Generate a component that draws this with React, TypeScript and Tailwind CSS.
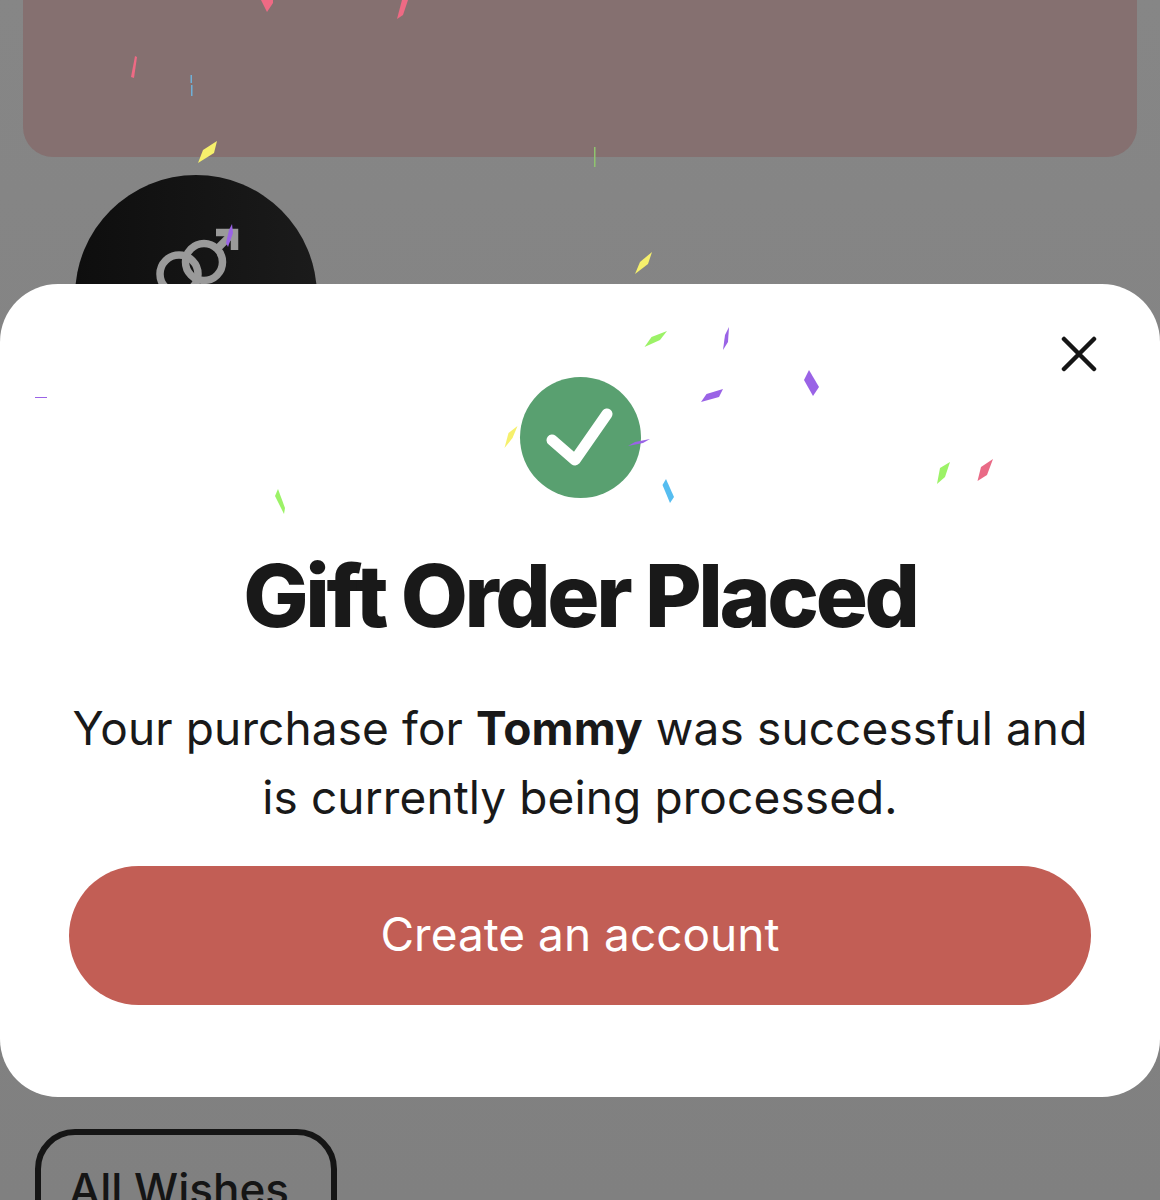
const CONFETTI: { points: string; fill: string }[] = [
  { points: '261,0 273,0 273,3 267,12', fill: '#ee6a84' },
  { points: '402,0 408,0 403,15 397,19', fill: '#ee6a84' },
  { points: '135,56 137,57 134,78 131,77', fill: '#ee6a84' },
  { points: '190.5,75 192,75 192,83 190.5,83', fill: '#6fb0d8' },
  { points: '191,85 192.5,85 192.5,96 191,96', fill: '#6fb0d8' },
  { points: '217,141 214,153 198,163 203,150', fill: '#f6f06c' },
  { points: '594,147 595.5,147 595.5,167 594,167', fill: '#8fc46f' },
  { points: '232,224 233,233 228,247 226,243 229,230', fill: '#9a63e6' },
  { points: '652,252 648,264 635,274 640,262', fill: '#f6f06c' },
  { points: '667,331 660,340 644.5,347 651.5,337', fill: '#9cf267' },
  { points: '729,327 728,342 723,350 725,335', fill: '#9a63e6' },
  { points: '809,370 819,387 813,396 804,380', fill: '#9a63e6' },
  { points: '723,389 719,397 701,402 706.5,394', fill: '#9a63e6' },
  { points: '517.5,426 512.5,438 504.5,448 508.5,433', fill: '#f6f06c' },
  { points: '650,439 643,443 628,446 635,442', fill: '#9a63e6' },
  { points: '666,479 674,497 670,503 662.5,485', fill: '#56bdf0' },
  { points: '950,462 945,477 937,484 940,468', fill: '#9cf267' },
  { points: '993,459 987,475 977.5,481 981,467', fill: '#e96a86' },
  { points: '35,397 47,397 47,398 35,398', fill: '#9a63e6' },
  { points: '278,489 285,508 284,514 275,496', fill: '#9cf267' },
];

function GenderIcon() {
  return (
    <svg width="100" height="80" viewBox="0 0 100 80" fill="none" stroke="#9a9a9a" strokeWidth="7.5">
      <circle cx="33" cy="59" r="19" />
      <circle cx="58" cy="47" r="18.5" />
      <path d="M72 33 L88 17" />
      <path d="M70 17.5 H88.5 V35" />
    </svg>
  );
}

function Confetti() {
  return (
    <svg className="absolute inset-0 pointer-events-none" width="1160" height="1200" viewBox="0 0 1160 1200">
      {CONFETTI.map(c => (
        <polygon key={c.points} points={c.points} fill={c.fill} />
      ))}
    </svg>
  );
}

export default function App() {
  return (
    <div
      className="relative h-[1200px] w-[1160px] overflow-hidden bg-gradient-to-b from-[#868686] to-[#808080]"
      style={{ fontFamily: 'Inter, "Liberation Sans", sans-serif' }}
    >
      {/* Page behind the overlay */}
      <div className="mx-[23px] h-[157px] rounded-b-[30px] bg-[#857070]" />
      <div className="ml-[75px] mt-[18px] flex h-[242px] w-[242px] justify-center rounded-full bg-gradient-to-r from-[#0e0e0e] to-[#1b1b1b] pt-[40px]">
        <GenderIcon />
      </div>
      <div className="ml-[35px] mt-[712px] h-[120px] w-[302px] rounded-[40px] border-[6px] border-[#151515] px-[28px] pt-[28px]">
        <span className="whitespace-nowrap text-[44px] font-medium leading-[52px] text-[#151515]">All Wishes</span>
      </div>

      {/* Modal */}
      <div className="absolute left-0 right-0 top-[284px] flex h-[813px] flex-col items-center rounded-[58px] bg-white px-[69px] pt-[93px]">
        <button className="absolute right-[62px] top-[52px]">
          <svg width="38" height="38" viewBox="0 0 38 38" fill="none" stroke="#151515" strokeWidth="4.5" strokeLinecap="round">
            <path d="M4 3 L34 33 M34 3 L4 33" />
          </svg>
        </button>

        <div className="flex h-[121px] w-[121px] items-center justify-center rounded-full bg-[#59a070]">
          <svg width="72" height="60" viewBox="0 0 72 60" fill="none" stroke="white" strokeWidth="11" strokeLinecap="round" strokeLinejoin="round">
            <path d="M8 32 L31 52 L63 6" />
          </svg>
        </div>

        <h1 className="mt-[48px] whitespace-nowrap text-[87px] font-extrabold leading-[100px] tracking-[-0.039em] text-[#191919]">
          Gift Order Placed
        </h1>

        <p className="mt-[48px] w-full text-center text-[46px] leading-[69px] tracking-[0.11px] text-[#191919]">
          Your purchase for <strong className="font-bold">Tommy</strong> was successful and is currently being processed.
        </p>

        <button className="mt-[34px] flex h-[139px] w-full items-center justify-center rounded-full bg-[#c25e55] pb-[2px] text-[46px] text-white">
          Create an account
        </button>
      </div>

      <Confetti />
    </div>
  );
}
